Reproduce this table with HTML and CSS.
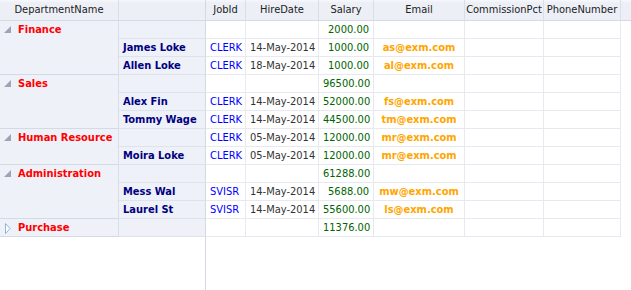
FILE: index.html
```html
<!DOCTYPE html>
<html lang="en">
<head>
    <meta charset="UTF-8">
    <title>Employees by Department</title>
    <link rel="stylesheet" href="styles.css">
</head>
<body>
    <div class="grid">
        <div class="frozen">
            <div class="head-cell first">DepartmentName</div>
            <div class="head-cell"></div>

            <div class="group span-3"><svg class="tri" width="8" height="8" viewBox="0 0 8 8"><polygon points="7,0 7,7 0,7" fill="#9aa6b6"/></svg>Finance</div>
            <div class="name"></div>
            <div class="name">James Loke</div>
            <div class="name">Allen Loke</div>

            <div class="group span-3"><svg class="tri" width="8" height="8" viewBox="0 0 8 8"><polygon points="7,0 7,7 0,7" fill="#9aa6b6"/></svg>Sales</div>
            <div class="name"></div>
            <div class="name">Alex Fin</div>
            <div class="name">Tommy Wage</div>

            <div class="group span-2"><svg class="tri" width="8" height="8" viewBox="0 0 8 8"><polygon points="7,0 7,7 0,7" fill="#9aa6b6"/></svg>Human Resource</div>
            <div class="name"></div>
            <div class="name">Moira Loke</div>

            <div class="group span-3"><svg class="tri" width="8" height="8" viewBox="0 0 8 8"><polygon points="7,0 7,7 0,7" fill="#9aa6b6"/></svg>Administration</div>
            <div class="name"></div>
            <div class="name">Mess Wal</div>
            <div class="name">Laurel St</div>

            <div class="group"><svg class="tri closed" width="6" height="11" viewBox="0 0 6 11"><polygon points="0.5,0.5 5,5.5 0.5,10.5" fill="#fff" stroke="#8fb2dc"/></svg>Purchase</div>
            <div class="name"></div>
        </div>

        <div class="data">
            <div class="head">
                <div class="head-cell">JobId</div>
                <div class="head-cell">HireDate</div>
                <div class="head-cell">Salary</div>
                <div class="head-cell">Email</div>
                <div class="head-cell">CommissionPct</div>
                <div class="head-cell">PhoneNumber</div>
                <div class="head-cell"></div>
            </div>

            <div class="row"><div></div><div></div><div class="salary">2000.00</div><div></div><div></div><div></div></div>
            <div class="row"><div class="job">CLERK</div><div class="date">14-May-2014</div><div class="salary">1000.00</div><div class="email">as@exm.com</div><div></div><div></div></div>
            <div class="row"><div class="job">CLERK</div><div class="date">18-May-2014</div><div class="salary">1000.00</div><div class="email">al@exm.com</div><div></div><div></div></div>

            <div class="row"><div></div><div></div><div class="salary">96500.00</div><div></div><div></div><div></div></div>
            <div class="row"><div class="job">CLERK</div><div class="date">14-May-2014</div><div class="salary">52000.00</div><div class="email">fs@exm.com</div><div></div><div></div></div>
            <div class="row"><div class="job">CLERK</div><div class="date">14-May-2014</div><div class="salary">44500.00</div><div class="email">tm@exm.com</div><div></div><div></div></div>

            <div class="row"><div class="job">CLERK</div><div class="date">05-May-2014</div><div class="salary">12000.00</div><div class="email">mr@exm.com</div><div></div><div></div></div>
            <div class="row"><div class="job">CLERK</div><div class="date">05-May-2014</div><div class="salary">12000.00</div><div class="email">mr@exm.com</div><div></div><div></div></div>

            <div class="row"><div></div><div></div><div class="salary">61288.00</div><div></div><div></div><div></div></div>
            <div class="row"><div class="job">SVISR</div><div class="date">14-May-2014</div><div class="salary">5688.00</div><div class="email">mw@exm.com</div><div></div><div></div></div>
            <div class="row"><div class="job">SVISR</div><div class="date">14-May-2014</div><div class="salary">55600.00</div><div class="email">ls@exm.com</div><div></div><div></div></div>

            <div class="row"><div></div><div></div><div class="salary">11376.00</div><div></div><div></div><div></div></div>
        </div>
    </div>
</body>
</html>
```

FILE: styles.css
```css
body {
    margin: 0;
    font-family: "DejaVu Sans Condensed", "DejaVu Sans", sans-serif;
    font-stretch: condensed;
    font-size: 11px;
    color: #222;
    background: #fff;
}

.grid {
    display: flex;
    height: 290px;
    overflow: hidden;
}

/* left, frozen part */
.frozen {
    width: 205px;
    border-right: 1px solid #d3dae5;
    display: grid;
    grid-template-columns: 119px 86px;
    grid-auto-rows: 18px;
    grid-template-rows: 21px;
    align-content: start;
    flex-shrink: 0;
}

.frozen > div {
    box-sizing: border-box;
}

.head-cell {
    height: 21px;
    box-sizing: border-box;
    background: linear-gradient(#f6f8fb, #eceff6 3px, #eceff6);
    border-bottom: 1px solid #d3dae5;
    border-right: 1px solid #d9dfe9;
    text-align: center;
    line-height: 20px;
    white-space: nowrap;
    overflow: hidden;
}

.frozen .head-cell:nth-child(2) {
    border-right: none;
}

.group {
    background: #eef1f8;
    border-right: 1px solid #d9dfe9;
    border-bottom: 1px solid #d3dae5;
    color: #ff0000;
    font-weight: bold;
    line-height: 18px;
    padding-left: 18px;
    position: relative;
    white-space: nowrap;
}

.span-2 { grid-row: span 2; }
.span-3 { grid-row: span 3; }

.tri {
    position: absolute;
    left: 4px;
    top: 5px;
}

.tri.closed {
    left: 5px;
    top: 4px;
}

.name {
    background: #eef1f8;
    border-bottom: 1px solid #dde3ec;
    color: #000080;
    font-weight: bold;
    line-height: 18px;
    padding-left: 4px;
    white-space: nowrap;
}

/* right, scrolling part */
.data {
    flex: 1;
}

.head {
    display: grid;
    grid-template-columns: 40px 73px 55px 91px 79px 77px 1fr;
}

.head .head-cell:last-child {
    border-right: none;
}

.row {
    display: grid;
    grid-template-columns: 40px 73px 55px 91px 79px 77px;
    height: 18px;
}

.row > div {
    box-sizing: border-box;
    border-right: 1px solid #e6eaf0;
    border-bottom: 1px solid #e6eaf0;
    line-height: 18px;
    padding: 0 4px;
    white-space: nowrap;
    overflow: hidden;
}

.job {
    color: #0000ff;
}

.date {
    color: #333;
}

.salary {
    color: #006400;
    text-align: right;
}

.email {
    color: #ffa500;
    font-weight: bold;
    text-align: center;
}
```
